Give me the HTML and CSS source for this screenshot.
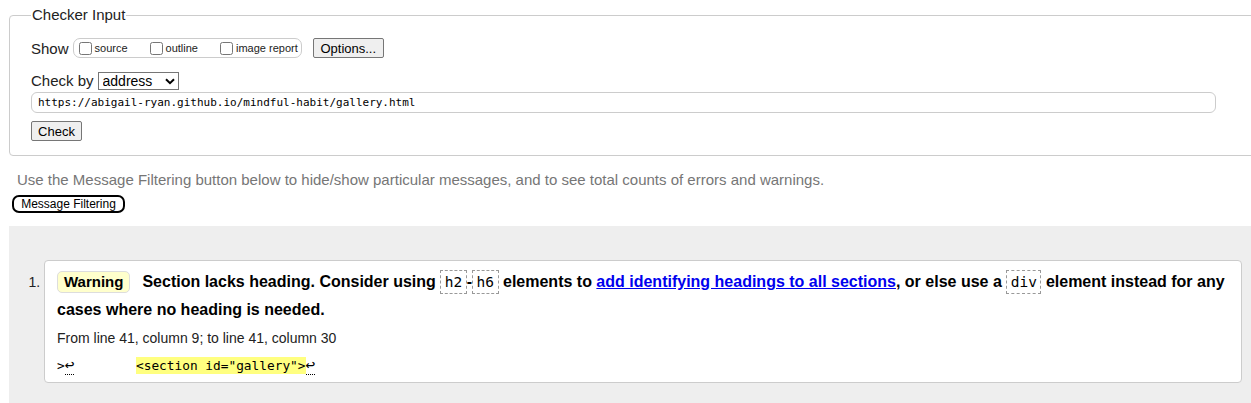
FILE: index.html
```html
<!DOCTYPE html>
<html lang="en">
<head>
<meta charset="utf-8">
<title>Nu Html Checker</title>
<link rel="stylesheet" href="styles.css">
</head>
<body>
<form class="checker">
  <fieldset class="input-set">
    <legend class="legend">Checker Input</legend>
    <div class="row show-row">
      <span class="label">Show</span>
      <span class="opts">
        <label class="opt"><input type="checkbox" class="cb">source</label>
        <label class="opt"><input type="checkbox" class="cb">outline</label>
        <label class="opt"><input type="checkbox" class="cb">image report</label>
      </span>
      <button type="button" class="btn btn-options">Options...</button>
    </div>
    <div class="row by-row">
      <span class="label">Check by</span>
      <span class="sel-wrap">
        <select class="sel"><option>address</option></select>
        <svg class="chev" width="10" height="7" viewBox="0 0 10 7"><polyline points="1,1.2 5,5.2 9,1.2" fill="none" stroke="#000" stroke-width="2"/></svg>
      </span>
    </div>
    <input class="url" type="text" value="https://abigail-ryan.github.io/mindful-habit/gallery.html">
    <div class="row">
      <button type="button" class="btn btn-check">Check</button>
    </div>
  </fieldset>
</form>
<p class="hint">Use the Message Filtering button below to hide/show particular messages, and to see total counts of errors and warnings.</p>
<button type="button" class="filter">Message Filtering</button>
<div class="results">
  <ol class="msgs">
    <li class="msg-item">
      <div class="card">
        <p class="msg"><span class="badge">Warning</span><span class="msg-text">Section lacks heading. Consider using <code class="cd">h2</code>-<code class="cd">h6</code> elements to <a class="link" href="#">add identifying headings to all sections</a>, or else use a <code class="cd">div</code> element instead for any cases where no heading is needed.</span></p>
        <p class="loc">From line 41, column 9; to line 41, column 30</p>
        <p class="extract"><code class="ex">&gt;<b class="lf">↩</b>        <mark class="hl">&lt;section id="gallery"&gt;</mark><b class="lf">↩</b></code></p>
      </div>
    </li>
  </ol>
</div>
</body>
</html>
```

FILE: styles.css
```css
html, body {
  margin: 0;
  padding: 0;
  background: #fff;
  font-family: "Liberation Sans", Arial, sans-serif;
  color: #000;
  overflow: hidden;
}

.checker {
  margin: 0;
  padding: 0 0 0 9px;
}

.input-set {
  margin: 6px -30px 0 0;
  padding: 2px 20px 14px 21px;
  border: 1px solid #ccc;
  border-radius: 4px;
}

.legend {
  padding: 0 1px;
  font-size: 15px;
  color: #222;
  line-height: 18px;
}

.row {
  display: flex;
  align-items: center;
}

.label {
  font-size: 15px;
  color: #222;
  margin-right: 4px;
}

.show-row {
  height: 20px;
  margin-top: 12px;
}

.opts {
  display: inline-flex;
  align-items: center;
  box-sizing: border-box;
  height: 20px;
  border: 1px solid #ccc;
  border-radius: 7px;
  padding: 0 3px 0 2px;
  margin-right: 11px;
}

.opt {
  display: inline-flex;
  align-items: center;
  font-size: 11px;
  color: #222;
  margin-right: 19px;
}

.opt:last-child {
  margin-right: 0;
}

.cb {
  width: 13px;
  height: 13px;
  margin: 0 3px 0 3px;
}

.btn {
  font-family: "Liberation Sans", Arial, sans-serif;
  font-size: 13px;
  color: #000;
  background: #efefef;
  border: 1px solid #767676;
  border-radius: 2px;
  padding: 0 6px;
  height: 20px;
}

.btn-options {
  width: 71px;
}

.by-row {
  margin-top: 13px;
  height: 19px;
}

.sel-wrap {
  position: relative;
  display: inline-block;
  height: 18px;
}

.sel {
  appearance: none;
  -webkit-appearance: none;
  display: block;
  box-sizing: border-box;
  width: 81px;
  height: 18px;
  font-family: "Liberation Sans", Arial, sans-serif;
  font-size: 14px;
  line-height: 16px;
  padding: 0 0 0 4px;
  margin: 0;
  border: 1px solid #767676;
  border-radius: 0;
  background: #fff;
  color: #000;
}

.chev {
  position: absolute;
  right: 4px;
  top: 6px;
  pointer-events: none;
}

.url {
  display: block;
  box-sizing: border-box;
  width: 1185px;
  height: 21px;
  margin: 2px 0 0 0;
  padding: 0 6px;
  border: 1px solid #ccc;
  border-radius: 6px;
  font-family: "DejaVu Sans Mono", "Liberation Mono", monospace;
  font-size: 11px;
  color: #000;
}

.btn-check {
  margin-top: 8px;
  width: 51px;
}

.hint {
  margin: 15px 0 0 17px;
  font-size: 15px;
  line-height: 17px;
  color: #767676;
}

.filter {
  display: block;
  margin: 7px 0 0 12px;
  height: 18px;
  width: 113px;
  padding: 0;
  border: 2px solid #000;
  border-radius: 7px;
  background: #fff;
  font-family: "Liberation Sans", Arial, sans-serif;
  font-size: 12px;
  color: #000;
  line-height: 13px;
}

.results {
  margin: 13px 0 0 9px;
  background: #eee;
  padding: 34px 9px 25px 0;
}

.msgs {
  margin: 0;
  padding: 0 0 0 35px;
  font-size: 14px;
}

.msg-item::marker {
  color: #222;
}

.msg-item {
  padding: 0;
}

.card {
  background: #fff;
  border: 1px solid #ccc;
  border-radius: 4px;
  padding: 7px 8px 3px 12px;
}

.msg {
  margin: 0;
  font-size: 16px;
  font-weight: bold;
  line-height: 28px;
}

.badge {
  display: inline-block;
  font-size: 15px;
  line-height: 20px;
  padding: 0 6px;
  background: #ffffcc;
  border: 1px solid #ddd;
  border-radius: 5px;
  margin-right: 12px;
  vertical-align: 0;
}

.cd {
  font-family: "DejaVu Sans Mono", "Liberation Mono", monospace;
  font-weight: normal;
  font-size: 14.5px;
  border: 1px dashed #999;
  padding: 3px 3.5px;
}

.link {
  color: #0000ee;
  text-decoration: underline;
}

.loc {
  margin: 0;
  font-size: 14px;
  line-height: 28px;
  color: #222;
}

.extract {
  margin: 0;
  line-height: 26px;
}

.ex {
  font-family: "DejaVu Sans Mono", "Liberation Mono", monospace;
  font-size: 12.8px;
  white-space: pre;
}

.lf {
  font-weight: normal;
  border-bottom: 1px dotted #000;
  font-size: 16px;
  line-height: 1;
}

.hl {
  background: #ffff80;
  color: #000;
  padding: 1px 0;
}
```
